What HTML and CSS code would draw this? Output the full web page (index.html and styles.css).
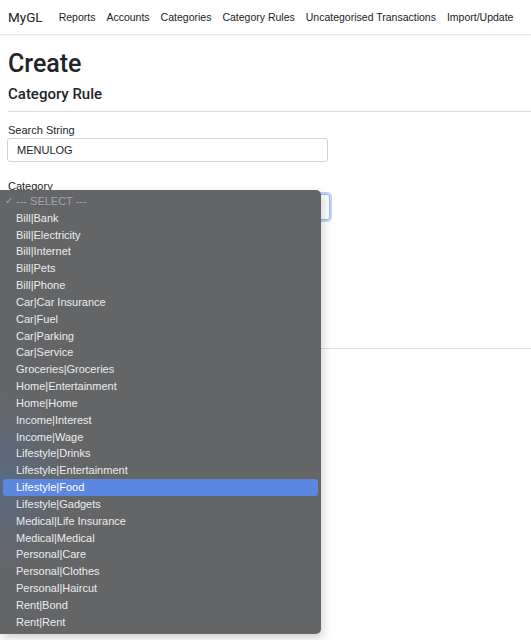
FILE: index.html
```html
<!DOCTYPE html>
<html>
<head>
<meta charset="utf-8">
<link rel="stylesheet" href="styles.css">
</head>
<body>
<nav class="navbar">
  <span class="brand">MyGL</span>
  <a class="nav-link">Reports</a>
  <a class="nav-link">Accounts</a>
  <a class="nav-link">Categories</a>
  <a class="nav-link">Category Rules</a>
  <a class="nav-link">Uncategorised Transactions</a>
  <a class="nav-link">Import/Update</a>
</nav>
<main class="container">
  <h1 class="title">Create</h1>
  <h4 class="subtitle">Category Rule</h4>
  <hr class="rule">
  <div class="form-group">
    <label class="label">Search String</label>
    <div class="input">MENULOG</div>
  </div>
  <div class="form-group">
    <label class="label">Category</label>
    <div class="select focused"></div>
  </div>
  <div class="spacer"></div>
  <hr class="rule lower">
</main>
<div class="menu">
  <div class="opt placeholder"><span class="check">✓</span>--- SELECT ---</div>
  <div class="opt">Bill|Bank</div>
  <div class="opt">Bill|Electricity</div>
  <div class="opt">Bill|Internet</div>
  <div class="opt">Bill|Pets</div>
  <div class="opt">Bill|Phone</div>
  <div class="opt">Car|Car Insurance</div>
  <div class="opt">Car|Fuel</div>
  <div class="opt">Car|Parking</div>
  <div class="opt">Car|Service</div>
  <div class="opt">Groceries|Groceries</div>
  <div class="opt">Home|Entertainment</div>
  <div class="opt">Home|Home</div>
  <div class="opt">Income|Interest</div>
  <div class="opt">Income|Wage</div>
  <div class="opt">Lifestyle|Drinks</div>
  <div class="opt">Lifestyle|Entertainment</div>
  <div class="opt active">Lifestyle|Food</div>
  <div class="opt">Lifestyle|Gadgets</div>
  <div class="opt">Medical|Life Insurance</div>
  <div class="opt">Medical|Medical</div>
  <div class="opt">Personal|Care</div>
  <div class="opt">Personal|Clothes</div>
  <div class="opt">Personal|Haircut</div>
  <div class="opt">Rent|Bond</div>
  <div class="opt">Rent|Rent</div>
</div>
</body>
</html>
```
FILE: styles.css
```css
* { box-sizing: border-box; }
html, body { margin: 0; padding: 0; }
body {
  font-family: "Liberation Sans", Arial, sans-serif;
  color: #212529;
  background: #fff;
  width: 531px;
  height: 640px;
  overflow: hidden;
  position: relative;
}
.navbar {
  display: flex;
  align-items: center;
  height: 35px;
  padding: 0 8px;
  border-bottom: 1px solid #e6e6e6;
  box-shadow: 0 1px 2px rgba(0,0,0,0.04);
}
.brand {
  font-family: Roboto, "Liberation Sans", sans-serif;
  font-size: 13.5px;
  margin-right: 16px;
  color: #222;
}
.nav-link {
  font-size: 10.5px;
  color: #222;
  margin-right: 11px;
  white-space: nowrap;
}
.container {
  padding: 0 8px;
}
.title {
  font-family: Roboto, "Liberation Sans", sans-serif;
  font-size: 25px;
  font-weight: 500;
  margin: 12px 0 0;
  line-height: 33px;
}
.subtitle {
  font-family: Roboto, "Liberation Sans", sans-serif;
  font-size: 15px;
  font-weight: 500;
  margin: 5px 0 0;
  line-height: 19px;
}
.rule {
  border: 0;
  border-top: 1px solid #ddd;
  margin: 7px 0 0;
  margin-right: -8px;
}
.form-group { margin-top: 11px; }
.form-group + .form-group { margin-top: 17px; }
.label {
  display: block;
  font-size: 11px;
  line-height: 14px;
  margin-bottom: 1px;
}
.input, .select {
  width: 321px;
  height: 24px;
  margin-left: -1px;
  border: 1px solid #d4d4d4;
  border-radius: 3px;
  font-size: 11px;
  line-height: 22px;
  padding-left: 9px;
}
.select.focused {
  width: 323px;
  height: 26px;
  border-color: #9fb9ef;
  box-shadow: 0 0 0 2px #c3d4f7;
}
.spacer { height: 128px; }
.lower { margin-top: 0; }
.menu {
  position: absolute;
  left: 0;
  top: 190px;
  width: 321px;
  height: 444px;
  background:
    radial-gradient(ellipse 70px 90px at 0px 290px, rgba(80,110,150,0.55), rgba(80,110,150,0) 100%),
    #646567;
  border-radius: 0 5px 5px 0;
  box-shadow: 2px 4px 10px rgba(0,0,0,0.18);
  padding-top: 3px;
  font-size: 11px;
  color: #ececec;
}
.opt {
  height: 16.83px;
  line-height: 16.83px;
  padding-left: 13px;
  margin: 0 3px;
  border-radius: 3px;
  position: relative;
  white-space: nowrap;
}
.placeholder { color: #a4a5a7; }
.check {
  position: absolute;
  left: 2px;
  font-size: 10px;
}
.opt.active {
  background: #5b87e0;
  color: #fff;
}
```
